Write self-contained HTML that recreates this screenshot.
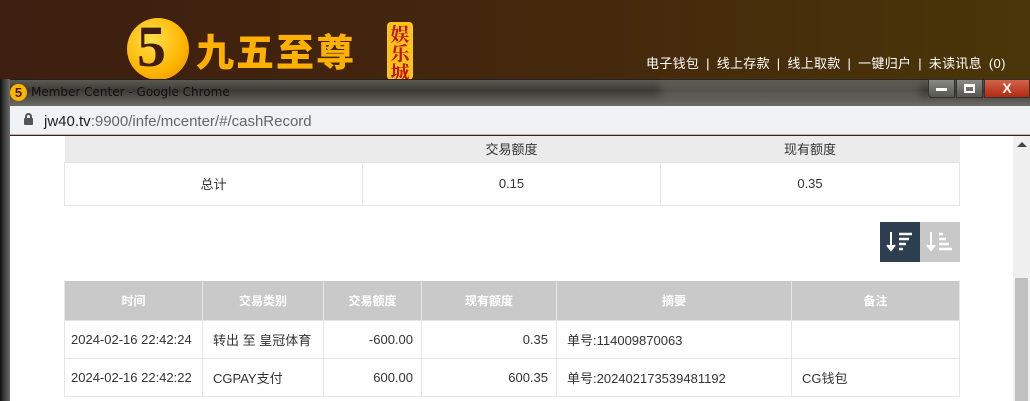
<!DOCTYPE html>
<html style="width:1030px;height:401px;overflow:hidden"><head><meta charset="utf-8"><style>
*{margin:0;padding:0;box-sizing:border-box}
body{width:1030px;height:401px;overflow:hidden;position:relative;font-family:"Liberation Sans","Noto Sans CJK SC",sans-serif;background:#3f2110}
.top{position:absolute;left:0;top:0;width:1030px;height:80px;background:linear-gradient(90deg,#3d1e10,#45290c 60%,#4a3608)}
.abs{position:absolute}
.nav{position:absolute;left:646px;top:53px;color:#fff;font-size:13px;white-space:nowrap;word-spacing:3px;letter-spacing:0.3px}
.title{position:absolute;left:3px;top:79px;width:1027px;height:27px;background:linear-gradient(180deg,#5a5a52,#3b3a36 40%,#6d6c64);border-top:1px solid #222}
.addr{position:absolute;left:10px;top:106px;width:1020px;height:29px;background:#f1f2f4;border-bottom:1px solid #b8b8b8}
.leftframe{position:absolute;left:0;top:79px;width:10px;height:322px;background:linear-gradient(90deg,#111,#3a3a3a 40%,#6b6b6b)}
.content{position:absolute;left:10px;top:136px;width:1003px;height:265px;background:#fff;overflow:hidden}
.sb{position:absolute;left:1013px;top:136px;width:17px;height:265px;background:#f0f0f0}
table{border-collapse:collapse;position:absolute;font-size:13px;color:#333}
td,th{border:1px solid #e6e6e6}
.th2 th{background:#c9c9c9;color:#fff;font-weight:bold;border:1px solid #e6e6e6;border-top:none;border-bottom:none;font-size:12px}
</style></head><body>
<div class="top"></div>
<div class="abs" style="left:127px;top:18px;width:62px;height:62px;border-radius:50%;background:radial-gradient(circle at 40% 35%,#ffe04a,#ffb400 60%,#e48a00)"></div>
<div class="abs" style="left:137px;top:14px;font-size:58px;font-weight:bold;color:#3d1e10;font-family:'Liberation Serif',serif;line-height:66px;height:66px;overflow:hidden">5</div>
<div class="abs" style="left:196px;top:28px;font-size:38px;font-weight:900;color:#ffb000;letter-spacing:2px;line-height:44px;font-family:'Noto Sans CJK SC',sans-serif">九五至尊</div>
<div class="abs" style="left:387px;top:22px;width:26px;height:58px;background:#ffc21a;border-radius:4px;color:#c01010;font-size:19px;font-weight:bold;line-height:19px;text-align:center;padding-top:2px;font-family:'Noto Serif CJK SC',serif;overflow:hidden">娱<br>乐<br>城</div>
<div class="nav">电子钱包 | 线上存款 | 线上取款 | 一键归户 | 未读讯息 (0)</div>
<div class="title"></div>
<div class="abs" style="left:660px;top:83px;width:260px;height:16px;background:rgba(150,150,150,.25);filter:blur(4px)"></div>
<div class="abs" style="left:10px;top:84px;width:17px;height:17px;border-radius:50%;background:#ffb400;color:#3d1e10;font-size:13px;font-weight:bold;text-align:center;line-height:17px">5</div>
<div class="abs" style="left:31px;top:85px;color:#111;font-family:'DejaVu Sans',sans-serif;font-size:12px">Member Center - Google Chrome</div>
<div class="abs" style="left:928px;top:79px;width:27px;height:19px;border:1px solid #333;background:linear-gradient(#8a8a84,#56554f);border-radius:0 0 0 4px"><div style="margin:8px auto 0;width:11px;height:3px;background:#fff"></div></div>
<div class="abs" style="left:956px;top:79px;width:27px;height:19px;border:1px solid #333;background:linear-gradient(#8a8a84,#56554f)"><div style="margin:4px auto 0;width:11px;height:9px;border:2px solid #fff;border-top-width:3px"></div></div>
<div class="abs" style="left:984px;top:79px;width:46px;height:19px;border:1px solid #333;background:linear-gradient(#d0634a,#b22a10);color:#fff;font-weight:bold;font-size:14px;text-align:center;line-height:17px">X</div>
<div class="leftframe"></div>
<div class="addr"></div>
<div class="abs" style="left:24px;top:118px;width:9px;height:7px;background:#555;border-radius:1px"></div>
<div class="abs" style="left:25px;top:113px;width:7px;height:7px;border:2px solid #555;border-bottom:none;border-radius:4px 4px 0 0"></div>
<div class="abs" style="left:44px;top:113px;font-size:15px;color:#222">jw40.tv<span style="color:#666">:9900/infe/mcenter/#/cashRecord</span></div>
<div class="content">
<table style="left:54px;top:0px;width:896px">
<tr style="height:26px;background:#ebebeb"><td style="width:298px;border:none"></td><td style="width:298px;text-align:center;border:none">交易额度</td><td style="text-align:center;border:none">现有额度</td></tr>
<tr style="height:43px"><td style="text-align:center">总计</td><td style="text-align:center">0.15</td><td style="text-align:center">0.35</td></tr>
</table>
<div class="abs" style="left:870px;top:86px;width:40px;height:40px;background:#2d3e50"><svg width="40" height="40"><path d="M11 10v17M7 23l4 5 4-5" stroke="#fff" stroke-width="2" fill="#fff"/><path d="M19 12h13M19 17h10M19 22h7M19 27h4" stroke="#fff" stroke-width="2.5"/></svg></div>
<div class="abs" style="left:910px;top:86px;width:40px;height:40px;background:#c8c8c8"><svg width="40" height="40"><path d="M11 10v17M7 23l4 5 4-5" stroke="#fff" stroke-width="2" fill="#fff"/><path d="M19 12h4M19 17h7M19 22h10M19 27h13" stroke="#fff" stroke-width="2.5"/></svg></div>
<table style="left:54px;top:145px;width:896px">
<tr class="th2" style="height:39px"><th style="width:138px">时间</th><th style="width:121px">交易类别</th><th style="width:98px">交易额度</th><th style="width:135px">现有额度</th><th style="width:235px">摘要</th><th>备注</th></tr>
<tr style="height:38px"><td style="padding-left:6px">2024-02-16 22:42:24</td><td style="padding-left:10px">转出 至 皇冠体育</td><td style="text-align:right;padding-right:8px">-600.00</td><td style="text-align:right;padding-right:8px">0.35</td><td style="padding-left:10px">单号:114009870063</td><td></td></tr>
<tr style="height:38px"><td style="padding-left:6px">2024-02-16 22:42:22</td><td style="padding-left:10px">CGPAY支付</td><td style="text-align:right;padding-right:8px">600.00</td><td style="text-align:right;padding-right:8px">600.35</td><td style="padding-left:10px">单号:202402173539481192</td><td style="padding-left:10px">CG钱包</td></tr>
</table>
</div>
<div class="sb"><div style="position:absolute;left:4px;top:6px;width:0;height:0;border-left:5px solid transparent;border-right:5px solid transparent;border-bottom:5px solid #444"></div><div style="position:absolute;left:2px;top:142px;width:13px;height:123px;background:#c0c0c0"></div></div>
</body></html>
